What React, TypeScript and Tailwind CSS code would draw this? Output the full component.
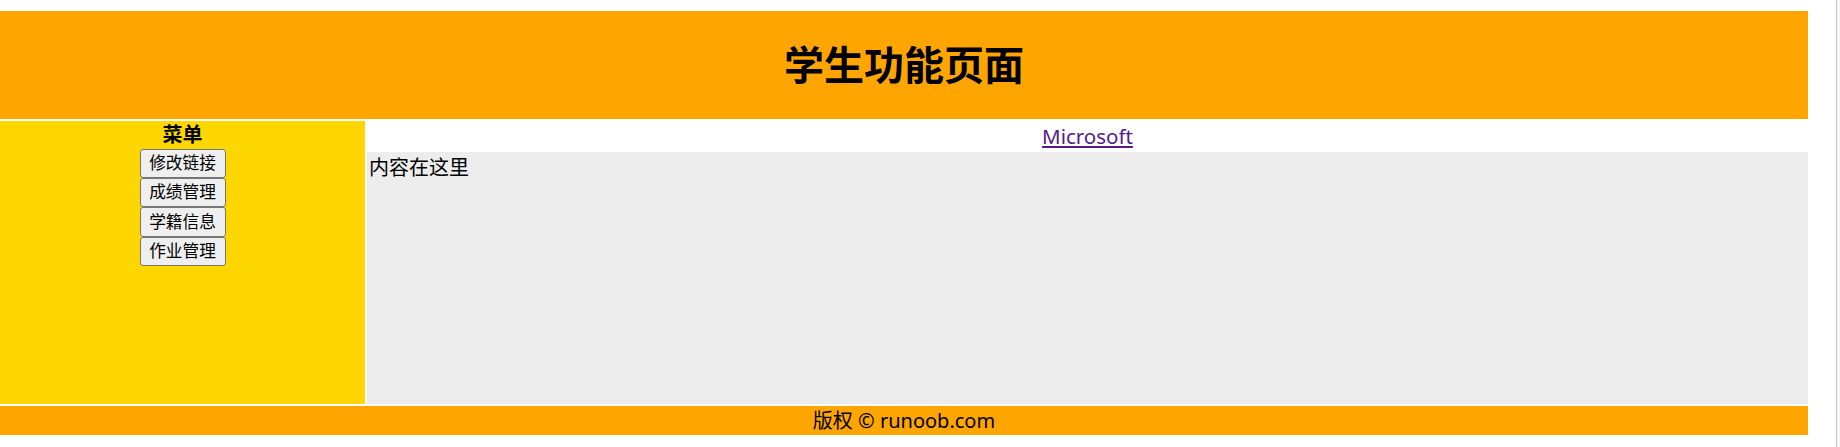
const font = { fontFamily: '"Noto Sans", "Noto Sans CJK SC", sans-serif' };

const menuItems = ['修改链接', '成绩管理', '学籍信息', '作业管理'];

function MenuButton({ label }: { label: string }) {
  return (
    <button className="h-[29.4px] w-[86px] rounded-[3px] border border-[#767676] bg-[#efefef] text-[16.7px] leading-none text-black">
      {label}
    </button>
  );
}

export default function App() {
  return (
    <div className="flex h-[447px] w-[1840px] bg-white text-black" style={font}>
      <div className="w-[1836px] pt-[11px]">
        <div className="w-[1808px]">
          <header className="flex h-[108px] items-center justify-center bg-[#ffa500]">
            <h1 className="text-[40px] font-bold leading-none">学生功能页面</h1>
          </header>

          <div className="mt-[2px] flex h-[283px] gap-[2px]">
            <aside className="flex w-[365px] flex-col items-center bg-[#ffd700]">
              <b className="h-[27.5px] text-[20px] leading-[27px]">菜单</b>
              {menuItems.map((item) => (
                <MenuButton key={item} label={item} />
              ))}
            </aside>

            <main className="flex flex-1 flex-col">
              <div className="flex h-[31px] items-center justify-center">
                <a href="#" className="text-[20.5px] leading-none text-[#551a8b] underline">
                  Microsoft
                </a>
              </div>
              <div className="flex-1 bg-[#ededed] px-[2px] text-[20px] leading-[32px]">内容在这里</div>
            </main>
          </div>

          <footer className="mt-[2px] flex h-[29px] items-center justify-center bg-[#ffa500] text-[20px] leading-none">
            版权 © runoob.com
          </footer>
        </div>
      </div>
      <div className="w-px bg-[#c2c2c2]" />
      <div className="flex-1 bg-[#f7f7f7]" />
    </div>
  );
}
